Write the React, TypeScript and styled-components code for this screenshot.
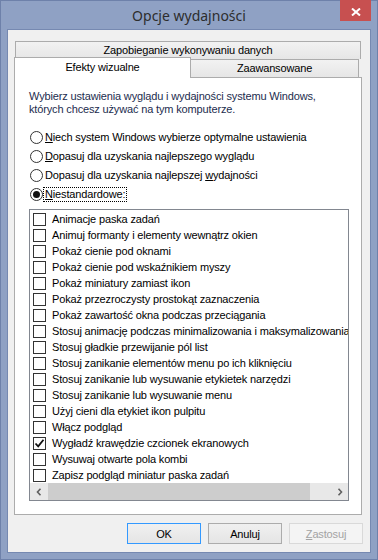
import React from 'react';
import styled, { createGlobalStyle, css } from 'styled-components';

const Global = createGlobalStyle`
  html, body { margin: 0; padding: 0; background: #8fa1c4; }
  body { font-family: "Liberation Sans", Arial, sans-serif; font-size: 11px; letter-spacing: -0.15px; color: #000; }
  * { box-sizing: border-box; }
`;

const Window = styled.div`
  width: 378px;
  height: 560px;
  background: #8fa1c4;
  border: 1px solid #6e81aa;
  padding: 0 6px 6px;
  display: flex;
  flex-direction: column;
`;

const TitleBar = styled.div`
  height: 28px;
  flex: none;
  display: grid;
  grid-template-columns: 1fr auto 1fr;
  align-items: center;
`;

const Title = styled.div`
  grid-column: 2;
  font-family: "Noto Sans", sans-serif;
  font-size: 14px;
  letter-spacing: 0;
  line-height: 28px;
  color: #2d2d2d;
  padding-top: 1px;
`;

const CloseButton = styled.div`
  grid-column: 3;
  justify-self: end;
  align-self: start;
  margin-top: -1px;
  width: 31px;
  height: 21px;
  background: #c75050;
  display: flex;
  align-items: center;
  justify-content: center;
  padding-top: 2px;
`;

const Client = styled.div`
  flex: 1;
  background: #f0f0f0;
  border: 1px solid #7689b1;
  padding: 11px 8px 0 6px;
  display: flex;
  flex-direction: column;
`;

const TabRow = styled.div<{ $first?: boolean }>`
  display: flex;
  align-items: flex-end;
  height: 18px;
  flex: none;
  ${p => p.$first ? css`margin: 0 1px 0 2px;` : css`padding-right: 3px;`}
`;

const Tab = styled.div<{ $active?: boolean }>`
  flex: 1;
  height: 18px;
  border: 1px solid #acacac;
  border-bottom: none;
  background: linear-gradient(#f2f2f2, #e6e6e6);
  display: flex;
  align-items: center;
  justify-content: center;
  line-height: 13px;
  white-space: nowrap;
  ${p => p.$active ? css`
    flex: 0 0 177px;
    height: 21px;
    margin-bottom: -1px;
    background: #fff;
    position: relative;
    z-index: 1;
    padding-bottom: 1px;
  ` : css`
    margin-left: -1px;
  `}
`;

const Panel = styled.div`
  height: 438px;
  flex: none;
  background: #fff;
  border: 1px solid #acacac;
  padding: 12px 11px 0 14px;
  display: flex;
  flex-direction: column;
`;

const Description = styled.div`
  line-height: 13px;
  color: #1c2c4e;
`;

const RadioGroup = styled.div`
  margin-top: 12px;
  display: flex;
  flex-direction: column;
`;

const RadioRow = styled.div`
  height: 19px;
  display: flex;
  align-items: center;
  padding-left: 1px;
  white-space: nowrap;
`;

const RadioCircle = styled.span<{ $checked?: boolean }>`
  width: 13px;
  height: 13px;
  border-radius: 50%;
  border: 1px solid #333;
  background: #fff;
  flex: none;
  display: flex;
  align-items: center;
  justify-content: center;
  &::after {
    content: "";
    width: 7px;
    height: 7px;
    border-radius: 50%;
    background: ${p => (p.$checked ? '#111' : 'transparent')};
  }
`;

const RadioLabel = styled.span<{ $focused?: boolean }>`
  padding: 0 1px;
  line-height: 13px;
  border: 1px ${p => (p.$focused ? 'dotted #000' : 'solid transparent')};
`;

const ListBox = styled.div`
  margin-top: 5px;
  width: 320px;
  height: 292px;
  flex: none;
  border: 1px solid #828790;
  background: #fff;
  padding-top: 1px;
  display: flex;
  flex-direction: column;
  overflow: hidden;
`;

const Items = styled.div`
  flex: 1;
  overflow: hidden;
`;

const ItemRow = styled.div`
  height: 16px;
  display: flex;
  align-items: center;
  padding-left: 3px;
  white-space: nowrap;
`;

const CheckBox = styled.span`
  width: 13px;
  height: 13px;
  border: 1px solid #333;
  background: #fff;
  flex: none;
  display: flex;
  align-items: center;
  justify-content: center;
`;

const ItemLabel = styled.span`
  margin-left: 6px;
  line-height: 13px;
`;

const ScrollBar = styled.div`
  height: 17px;
  flex: none;
  display: flex;
  background: #e8e8e8;
`;

const ScrollArrow = styled.div`
  width: 17px;
  flex: none;
  display: flex;
  align-items: center;
  justify-content: center;
`;

const Thumb = styled.div`
  width: 262px;
  margin-left: 1px;
  background: #cdcdcd;
`;

const Track = styled.div`
  flex: 1;
`;

const ButtonRow = styled.div`
  display: flex;
  justify-content: flex-end;
  gap: 7px;
  padding: 8px 0;
  margin-right: -1px;
`;

const Button = styled.div<{ $default?: boolean; $disabled?: boolean }>`
  width: 74px;
  height: 21px;
  border: 1px solid #acacac;
  background: linear-gradient(#f0f0f0, #e5e5e5);
  display: flex;
  align-items: center;
  justify-content: center;
  ${p => p.$default && css`border-color: #3399ff;`}
  ${p => p.$disabled && css`
    border-color: #d9d9d9;
    background: #f4f4f4;
    color: #a3a3a3;
  `}
`;

const radios = [
  { label: <><u>N</u>iech system Windows wybierze optymalne ustawienia</> },
  { label: <><u>D</u>opasuj dla uzyskania najlepszego wyglądu</> },
  { label: <>Dopasuj dla uzyskania najlepszej <u>w</u>ydajności</> },
  { label: <><u>N</u>iestandardowe:</>, checked: true },
];

const items = [
  'Animacje paska zadań',
  'Animuj formanty i elementy wewnątrz okien',
  'Pokaż cienie pod oknami',
  'Pokaż cienie pod wskaźnikiem myszy',
  'Pokaż miniatury zamiast ikon',
  'Pokaż przezroczysty prostokąt zaznaczenia',
  'Pokaż zawartość okna podczas przeciągania',
  'Stosuj animację podczas minimalizowania i maksymalizowania okien',
  'Stosuj gładkie przewijanie pól list',
  'Stosuj zanikanie elementów menu po ich kliknięciu',
  'Stosuj zanikanie lub wysuwanie etykietek narzędzi',
  'Stosuj zanikanie lub wysuwanie menu',
  'Użyj cieni dla etykiet ikon pulpitu',
  'Włącz podgląd',
  'Wygładź krawędzie czcionek ekranowych',
  'Wysuwaj otwarte pola kombi',
  'Zapisz podgląd miniatur paska zadań',
];
const checkedItems = new Set(['Wygładź krawędzie czcionek ekranowych']);

const CheckMark = () => (
  <svg width="11" height="11" viewBox="0 0 11 11">
    <path d="M1.5 5.5 L4.2 8.3 L9.5 1.8" fill="none" stroke="#111" strokeWidth="1.8" />
  </svg>
);

const Chevron = ({ dir }: { dir: 'left' | 'right' }) => (
  <svg width="6" height="8" viewBox="0 0 6 8">
    <path
      d={dir === 'left' ? 'M4.5 0.8 L1.5 4 L4.5 7.2' : 'M1.5 0.8 L4.5 4 L1.5 7.2'}
      fill="none"
      stroke="#606060"
      strokeWidth="1.6"
    />
  </svg>
);

export default function App() {
  return (
    <>
      <Global />
      <Window>
        <TitleBar>
          <Title>Opcje wydajności</Title>
          <CloseButton>
            <svg width="10" height="8" viewBox="0 0 10 8">
              <path d="M1 0.5 L9 7.5 M9 0.5 L1 7.5" stroke="#fff" strokeWidth="2" />
            </svg>
          </CloseButton>
        </TitleBar>
        <Client>
          <TabRow $first>
            <Tab>Zapobieganie wykonywaniu danych</Tab>
          </TabRow>
          <TabRow>
            <Tab $active>Efekty wizualne</Tab>
            <Tab>Zaawansowane</Tab>
          </TabRow>
          <Panel>
            <Description>
              Wybierz ustawienia wyglądu i wydajności systemu Windows,
              <br />
              których chcesz używać na tym komputerze.
            </Description>
            <RadioGroup>
              {radios.map((r, i) => (
                <RadioRow key={i}>
                  <RadioCircle $checked={r.checked} />
                  <RadioLabel $focused={r.checked}>{r.label}</RadioLabel>
                </RadioRow>
              ))}
            </RadioGroup>
            <ListBox>
              <Items>
                {items.map(t => (
                  <ItemRow key={t}>
                    <CheckBox>{checkedItems.has(t) && <CheckMark />}</CheckBox>
                    <ItemLabel>{t}</ItemLabel>
                  </ItemRow>
                ))}
              </Items>
              <ScrollBar>
                <ScrollArrow><Chevron dir="left" /></ScrollArrow>
                <Thumb />
                <Track />
                <ScrollArrow><Chevron dir="right" /></ScrollArrow>
              </ScrollBar>
            </ListBox>
          </Panel>
          <ButtonRow>
            <Button $default>OK</Button>
            <Button>Anuluj</Button>
            <Button $disabled><span><u>Z</u>astosuj</span></Button>
          </ButtonRow>
        </Client>
      </Window>
    </>
  );
}
